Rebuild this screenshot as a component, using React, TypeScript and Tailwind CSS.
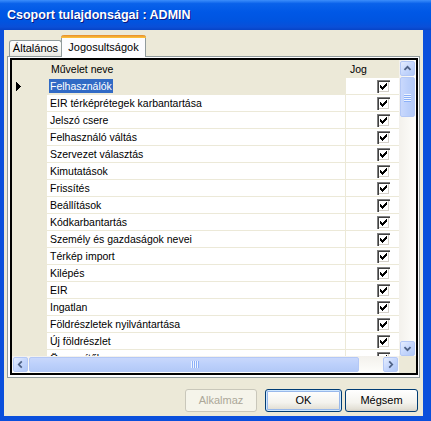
import React from 'react'

const ROWS = [
  'Felhasználók',
  'EIR térképrétegek karbantartása',
  'Jelszó csere',
  'Felhasználó váltás',
  'Szervezet választás',
  'Kimutatások',
  'Frissítés',
  'Beállítások',
  'Kódkarbantartás',
  'Személy és gazdaságok nevei',
  'Térkép import',
  'Kilépés',
  'EIR',
  'Ingatlan',
  'Földrészletek nyilvántartása',
  'Új földrészlet',
  'Összesítők',
]

function Check() {
  return (
    <div className="w-[13px] h-[13px] bg-white shadow-[inset_1px_1px_0_#808080,inset_2px_2px_0_#404040,inset_-1px_-1px_0_#ffffff,inset_-2px_-2px_0_#d4d0c8]">
      <svg width="13" height="13" viewBox="0 0 13 13" shapeRendering="crispEdges">
        <path d="M3 5h1v3H3zM4 6h1v3H4zM5 7h1v3H5zM6 6h1v3H6zM7 5h1v3H7zM8 4h1v3H8zM9 3h1v3H9z" fill="#000" />
      </svg>
    </div>
  )
}

function ArrowBtn({ dir }: { dir: 'up' | 'down' | 'left' | 'right' }) {
  const d = {
    up: 'M4 9 L7.5 5.5 L11 9',
    down: 'M4 6 L7.5 9.5 L11 6',
    left: 'M9 4 L5.5 7.5 L9 11',
    right: 'M6 4 L9.5 7.5 L6 11',
  }[dir]
  return (
    <div className="w-[15px] h-[15px] rounded-[2px] border border-[#b4c8f6] bg-[linear-gradient(135deg,#e6eeff_0%,#c6d7fc_50%,#b0c8f7_100%)] flex items-center justify-center">
      <svg width="15" height="15" viewBox="0 0 15 15">
        <path d={d} fill="none" stroke="#4d6185" strokeWidth="2" />
      </svg>
    </div>
  )
}

function GripV() {
  return (
    <div className="flex flex-col gap-[1px]">
      {[0, 1, 2, 3].map((i) => (
        <div key={i} className="w-[7px] h-[1px] bg-[#eef4fe] shadow-[0_1px_0_#8cb0f8]" />
      ))}
    </div>
  )
}

function GripH() {
  return (
    <div className="flex gap-[1px]">
      {[0, 1, 2, 3].map((i) => (
        <div key={i} className="w-[1px] h-[7px] bg-[#eef4fe] shadow-[1px_0_0_#8cb0f8]" />
      ))}
    </div>
  )
}

function XpButton({ label, width, disabled, isDefault }: { label: string; width: string; disabled?: boolean; isDefault?: boolean }) {
  if (disabled) {
    return (
      <div className={`${width} h-[23px] rounded-[3px] border border-[#c9c7ba] bg-[#f5f4ea] text-[#aca899] flex items-center justify-center`}>
        {label}
      </div>
    )
  }
  return (
    <div
      className={`${width} h-[23px] rounded-[3px] border border-[#003c74] bg-[linear-gradient(180deg,#ffffff_0%,#f4f3ee_60%,#e3e0d6_90%,#d6d0c5_100%)] text-black flex items-center justify-center ${
        isDefault ? 'shadow-[inset_0_0_0_1px_#cee7ff,inset_0_0_0_2px_#98b8ea]' : ''
      }`}
    >
      {label}
    </div>
  )
}

export default function App() {
  return (
    <div className="w-[431px] h-[421px] flex flex-col bg-[#0a4fdc] font-['Liberation_Sans',Arial,sans-serif] text-[10.5px] leading-none select-none">
      {/* title bar */}
      <div className="h-[30px] shrink-0 flex items-center pl-[7px] bg-[linear-gradient(180deg,#3c8efb_0%,#0a62ea_12%,#0058e6_40%,#0054e0_70%,#0a4fd8_90%,#0743c6_100%)]">
        <span className="text-white font-bold text-[12.5px] [text-shadow:1px_1px_0_#0a1883]">Csoport tulajdonságai : ADMIN</span>
      </div>

      <div className="flex-1 pl-[4px] pr-[8px] pb-[5px]">
        <div className="h-full bg-[#ece9d8] flex flex-col pt-[5px] px-[3px]">
          {/* tabs */}
          <div className="relative z-10 flex items-end h-[22px] -mb-[1px] pl-[2px]">
            <div className="w-[53px] h-[16px] mb-[1px] border border-b-0 border-[#919b9c] rounded-t-[3px] bg-[linear-gradient(180deg,#ffffff_0%,#f3f3ef_70%,#e8e7e0_100%)] flex items-center justify-center text-[11px]">
              Általános
            </div>
            <div className="w-[85px] h-[22px] -ml-[1px] border-x border-[#919b9c] rounded-t-[3px] bg-[#fcfcfe] flex flex-col">
              <div className="h-[3px] -mx-[1px] rounded-t-[3px] bg-[linear-gradient(180deg,#e68b2c_0%,#ffc73c_100%)]" />
              <div className="flex-1 flex items-center justify-center text-[11px] pb-[1px]">Jogosultságok</div>
            </div>
          </div>

          {/* panel */}
          <div className="h-[322px] border border-[#919b9c] bg-[#fcfcfe] pt-[1px] px-[2px] pb-[2px]">
            <div className="h-[317px] w-[408px] border-2 border-black flex">
              {/* content column */}
              <div className="w-[387px] flex flex-col">
                <div className="h-[296px] overflow-hidden bg-white">
                  <div className="w-[409px]">
                    {/* header */}
                    <div className="h-[18px] flex bg-[#ece9d8]">
                      <div className="w-[35px]" />
                      <div className="w-[299px] pl-[4px] flex items-center">Művelet neve</div>
                      <div className="w-[75px] pl-[4px] flex items-center">Jog</div>
                    </div>
                    {ROWS.map((r, i) => (
                      <div key={r} className="h-[17px] flex">
                        <div className="w-[35px] bg-[#ece9d8] flex items-center pl-[4px]">
                          {i === 0 && (
                            <svg width="6" height="9" viewBox="0 0 6 9" shapeRendering="crispEdges">
                              <path d="M0 0 L5 4.5 L0 9 Z" fill="#000" />
                            </svg>
                          )}
                        </div>
                        <div
                          className={`w-[299px] pl-[2px] flex items-center border-r border-b border-[#ece9d8] ${
                            i === 0 ? 'bg-[#ece9d8]' : 'bg-white'
                          }`}
                        >
                          <span className={`px-[1px] py-[2px] ${i === 0 ? 'bg-[#316ac5] text-white' : ''}`}>{r}</span>
                        </div>
                        <div className="w-[75px] flex items-center justify-center border-r border-b border-[#ece9d8] bg-white">
                          <Check />
                        </div>
                      </div>
                    ))}
                  </div>
                </div>
                {/* horizontal scrollbar */}
                <div className="h-[17px] flex items-center pl-[1px] bg-[linear-gradient(180deg,#f3f1ec_0%,#fefefb_100%)]">
                  <ArrowBtn dir="left" />
                  <div className="w-[330px] h-[15px] ml-[1px] rounded-[2px] border border-[#b4c8f6] bg-[linear-gradient(180deg,#c9d8fc_0%,#bcd0fb_50%,#b3c9f7_100%)] flex items-center justify-center">
                    <GripH />
                  </div>
                  <div className="flex-1" />
                  <ArrowBtn dir="right" />
                  <div className="w-[1px]" />
                </div>
              </div>
              {/* vertical scrollbar column */}
              <div className="w-[17px] flex flex-col">
                <div className="h-[296px] flex flex-col items-center pt-[1px] bg-[linear-gradient(90deg,#f3f1ec_0%,#fefefb_100%)]">
                  <ArrowBtn dir="up" />
                  <div className="w-[15px] h-[40px] mt-[1px] rounded-[2px] border border-[#b4c8f6] bg-[linear-gradient(90deg,#c9d8fc_0%,#bcd0fb_50%,#b3c9f7_100%)] flex items-center justify-center">
                    <GripV />
                  </div>
                  <div className="flex-1" />
                  <ArrowBtn dir="down" />
                </div>
                <div className="flex-1 bg-[#ece9d8]" />
              </div>
            </div>
          </div>

          {/* buttons */}
          <div className="mt-[11px] h-[23px] flex justify-end pr-[2px] text-[11px]">
            <XpButton label="Alkalmaz" width="w-[72px]" disabled />
            <div className="w-[8px]" />
            <XpButton label="OK" width="w-[77px]" isDefault />
            <div className="w-[3px]" />
            <XpButton label="Mégsem" width="w-[73px]" />
          </div>
        </div>
      </div>
    </div>
  )
}
